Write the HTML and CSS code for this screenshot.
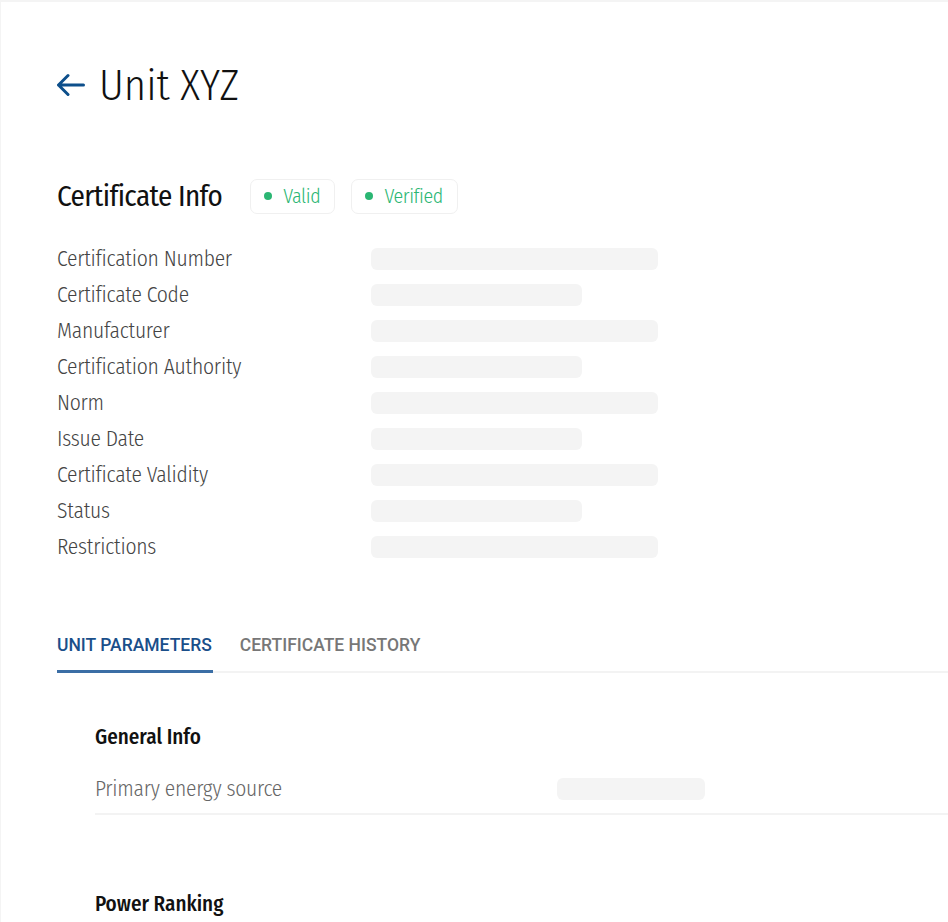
FILE: index.html
```html
<!DOCTYPE html>
<html lang="en">
<head>
<meta charset="utf-8">
<title>Unit XYZ</title>
<link rel="stylesheet" href="styles.css">
</head>
<body>
<main class="page">
  <header class="header">
    <svg class="back" width="28" height="24" viewBox="0 0 28 24" aria-hidden="true">
      <path d="M26.5 12H1.5M11 2.5L1.5 12l9.5 9.5" fill="none" stroke="#0d4f8b" stroke-width="3" stroke-linecap="round" stroke-linejoin="round"/>
    </svg>
    <h1 class="title">Unit XYZ</h1>
  </header>

  <section class="cert">
    <div class="cert-head">
      <h2 class="cert-title">Certificate Info</h2>
      <span class="badge"><span class="dot"></span>Valid</span>
      <span class="badge"><span class="dot"></span>Verified</span>
    </div>
    <dl class="info">
      <dt>Certification Number</dt><dd><span class="sk wide"></span></dd>
      <dt>Certificate Code</dt><dd><span class="sk narrow"></span></dd>
      <dt>Manufacturer</dt><dd><span class="sk wide"></span></dd>
      <dt>Certification Authority</dt><dd><span class="sk narrow"></span></dd>
      <dt>Norm</dt><dd><span class="sk wide"></span></dd>
      <dt>Issue Date</dt><dd><span class="sk narrow"></span></dd>
      <dt>Certificate Validity</dt><dd><span class="sk wide"></span></dd>
      <dt>Status</dt><dd><span class="sk narrow"></span></dd>
      <dt>Restrictions</dt><dd><span class="sk wide"></span></dd>
    </dl>
  </section>

  <nav class="tabs">
    <a class="tab active">UNIT PARAMETERS</a>
    <a class="tab">CERTIFICATE HISTORY</a>
  </nav>

  <section class="params">
    <h3 class="sub">General Info</h3>
    <div class="prow">
      <span class="plabel">Primary energy source</span>
      <span class="sk small"></span>
    </div>
    <h3 class="sub sub2">Power Ranking</h3>
  </section>
</main>
</body>
</html>
```

FILE: styles.css
```css
* { box-sizing: border-box; }
html, body { margin: 0; padding: 0; }
body {
  background: #f4f4f4;
  padding: 2px 0 0 1px;
  font-family: "Fira Sans Condensed", "Roboto Condensed", Roboto, "Liberation Sans", sans-serif;
  color: #111;
  height: 922px;
  overflow: hidden;
}
.page {
  background: #fff;
  height: 920px;
  padding: 58px 0 0 56px;
}
.header {
  display: flex;
  align-items: center;
  gap: 14px;
  height: 50px;
}
.back { display: block; }
.title {
  margin: 0;
  font-size: 42.5px;
  font-weight: 300;
  color: #111;
}
.cert { margin-top: 68px; }
.cert-head {
  display: flex;
  align-items: center;
  gap: 16px;
  height: 36px;
}
.cert-title {
  margin: 0 12px 0 0;
  font-size: 29px;
  font-weight: 400;
  letter-spacing: -0.6px;
}
.badge {
  display: inline-flex;
  align-items: center;
  gap: 11px;
  height: 35px;
  padding: 0 14px 0 13px;
  border: 1px solid #f0f0f0;
  border-radius: 7px;
  color: #2bb673;
  font-size: 20px;
  font-weight: 300;
  letter-spacing: -0.4px;
}
.dot {
  width: 8px; height: 8px; border-radius: 50%;
  background: #2bb673;
}
.info {
  display: grid;
  grid-template-columns: 314px 1fr;
  grid-auto-rows: 36px;
  margin: 27px 0 0 0;
  align-items: center;
}
.info dt {
  font-size: 21.5px;
  font-weight: 300;
  color: #444;
  letter-spacing: -0.25px;
}
.info dd { margin: 0; display: flex; align-items: center; }
.sk {
  display: block;
  height: 22px;
  background: #f4f4f4;
  border-radius: 6px;
}
.sk.wide { width: 287px; }
.sk.narrow { width: 211px; }
.sk.small { width: 148px; }
.tabs {
  margin-top: 57px;
  display: flex;
  gap: 27px;
  border-bottom: 2px solid #f3f3f3;
  height: 51px;
}
.tab {
  display: flex;
  align-items: center;
  font-family: Roboto, "Liberation Sans", sans-serif;
  font-size: 17.5px;
  font-weight: 500;
  color: #777;
  padding: 0 1px 2px 0;
  margin-bottom: -2px;
  border-bottom: 3px solid transparent;
}
.tab.active {
  color: #1a4f8a;
  border-bottom-color: #3b6ea5;
}
.params { padding: 0 0 0 38px; }
.sub {
  margin: 0;
  font-size: 21px;
  font-weight: 500;
  height: 26px;
  line-height: 26px;
  margin-top: 51px;
}
.prow {
  display: flex;
  align-items: center;
  margin-top: 15px;
  height: 50px;
  border-bottom: 2px solid #f3f3f3;
}
.plabel {
  width: 462px;
  font-size: 21.5px;
  font-weight: 300;
  color: #666;
  letter-spacing: -0.25px;
}
.sub2 { margin-top: 76px; }
```
